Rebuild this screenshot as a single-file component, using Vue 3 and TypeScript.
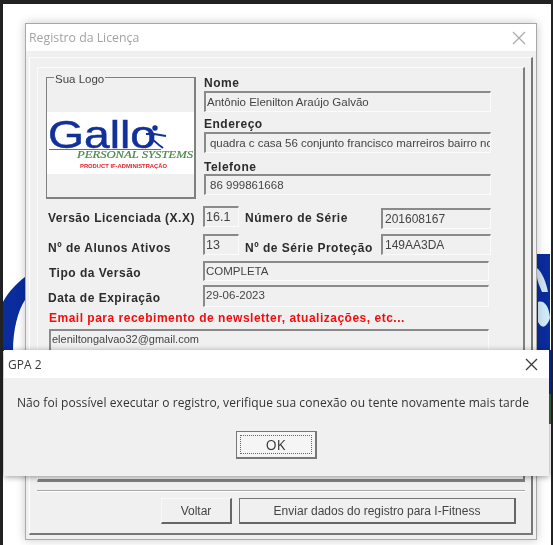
<script setup lang="ts">
interface Row {
  label: string
  value: string
  labelClass: string
  fieldClass: string
}

const fullRows: Row[] = [
  { label: 'Tipo da Versão', value: 'COMPLETA', labelClass: 'lab-tipo', fieldClass: 'f-tipo' },
  { label: 'Data de Expiração', value: '29-06-2023', labelClass: 'lab-data', fieldClass: 'f-data' },
]
</script>

<template>
  <div class="page">
    <div class="screen">
      <svg class="backdrop" width="553" height="545" viewBox="0 0 553 545" aria-hidden="true">
        <path d="M3 302 C9 291 17 283 25 277 L25 300 C18 310 13 330 13 351 L3 351 Z" fill="#0a2c9c" />
        <rect x="537" y="254" width="13" height="96" fill="#0a2c9c" />
        <path d="M537 268 C542 272 546 282 548 292 L542 292 C539 285 537 280 537 276 Z" fill="#cfe2f5" />
        <path d="M538 302 C544 300 549 306 550 318 C547 327 542 330 538 322 Z" fill="#cfeaf8" />
        <rect x="549" y="350" width="2" height="44" fill="#0a2c9c" />
        <rect x="549" y="394" width="2" height="30" fill="#3c6a44" />
      </svg>

      <section class="window">
        <header class="titlebar">
          <span class="title">Registro da Licença</span>
          <svg class="close" width="14" height="14" viewBox="0 0 14 14" aria-hidden="true">
            <path d="M1 1 L13 13 M13 1 L1 13" stroke="#a9a9a9" stroke-width="1.2" fill="none" />
          </svg>
        </header>

        <div class="body">
          <div class="outer">
            <div class="frame">
              <div class="top">
                <div class="logo-box">
                  <span class="legend">Sua Logo</span>
                  <div class="logo">
                    <svg width="148" height="62" viewBox="0 0 148 62" aria-label="Gallo Personal Systems">
                      <text x="1" y="36" class="gallo" textLength="108" lengthAdjust="spacingAndGlyphs">Gallo</text>
                      <path d="M2 37.5 L114 37.5" stroke="#5a68b4" stroke-width="1.2" />
                      <g stroke="#12309a" fill="none" stroke-width="1.8">
                        <circle cx="108" cy="16" r="1.8" fill="#12309a" />
                        <path d="M99 22 L107 22 L119 24 M107 22 L105 27 L98 36 M105 27 L112 33 L116 36" />
                      </g>
                      <text x="30" y="46" class="personal" textLength="116" lengthAdjust="spacingAndGlyphs">PERSONAL SYSTEMS</text>
                      <text x="33" y="56" class="tiny" textLength="87" lengthAdjust="spacingAndGlyphs">PRODUCT IF-ADMINISTRAÇÃO</text>
                    </svg>
                  </div>
                </div>
                <div class="contact">
                  <label class="lab lab-nome">Nome</label>
                  <div class="field f-nome">Antônio Elenilton Araújo Galvão</div>
                  <label class="lab lab-end">Endereço</label>
                  <div class="field f-end indent">quadra c casa 56 conjunto francisco marreiros bairro nc</div>
                  <label class="lab lab-tel">Telefone</label>
                  <div class="field f-tel indent">86 999861668</div>
                </div>
              </div>

              <div class="row row-versao">
                <label class="lab lab-left">Versão Licenciada (X.X)</label>
                <div class="field small top-text">16.1</div>
                <label class="lab lab-mid">Número de Série</label>
                <div class="field serial serial-low indent-s">201608167</div>
              </div>
              <div class="row row-alunos">
                <label class="lab lab-left">Nº de Alunos Ativos</label>
                <div class="field small top-text">13</div>
                <label class="lab lab-mid">Nº de Série Proteção</label>
                <div class="field serial top-text indent-s">149AA3DA</div>
              </div>

              <div v-for="r in fullRows" :key="r.label" class="row" :class="r.fieldClass + '-row'">
                <label class="lab lab-left" :class="r.labelClass">{{ r.label }}</label>
                <div class="field wide top-text" :class="r.fieldClass">{{ r.value }}</div>
              </div>

              <p class="email-label">Email para recebimento de newsletter, atualizações, etc...</p>
              <div class="field email">eleniltongalvao32@gmail.com</div>
            </div>

            <div class="separator"></div>

            <div class="actions">
              <button class="btn btn-back" type="button">Voltar</button>
              <button class="btn btn-send" type="button">Enviar dados do registro para I-Fitness</button>
            </div>
          </div>
        </div>
      </section>

      <section class="dialog">
        <header class="dlg-title">
          <span>GPA 2</span>
          <svg width="13" height="13" viewBox="0 0 13 13" aria-hidden="true">
            <path d="M1 1 L12 12 M12 1 L1 12" stroke="#3c3c3c" stroke-width="1.3" fill="none" />
          </svg>
        </header>
        <div class="dlg-body">
          <p class="msg">Não foi possível executar o registro, verifique sua conexão ou tente novamente mais tarde</p>
          <button class="ok" type="button"><span>OK</span></button>
        </div>
      </section>
    </div>
  </div>
</template>

<style>
html, body { margin: 0; background: #222; }
</style>

<style scoped>
.page {
  width: 553px;
  height: 545px;
  overflow: hidden;
  background: #222;
  padding: 4px 2px 0 3px;
  box-sizing: border-box;
  font-family: "Liberation Sans", Arial, sans-serif;
  color: #3c3c3c;
}
.screen {
  position: relative;
  width: 548px;
  height: 541px;
  background: #fff;
  filter: blur(0.4px);
}
.backdrop { position: absolute; left: -3px; top: -4px; }

/* main window */
.window {
  position: absolute;
  left: 22px;
  top: 19px;
  width: 512px;
  height: 517px;
  box-sizing: border-box;
  border: 1px solid #a8a8a8;
  background: #f0f0f0;
  box-shadow: 0 0 9px rgba(0, 0, 0, 0.22);
  display: flex;
  flex-direction: column;
}
.titlebar {
  height: 27px;
  flex: none;
  background: #fff;
  display: flex;
  align-items: center;
  justify-content: space-between;
  padding: 0 10px 0 3px;
}
.title { font: 12.3px "Open Sans", sans-serif; color: #a3a3a3; }
.body { flex: 1; padding: 6px 3px 4px 3px; min-height: 0; display: flex; }
.outer {
  flex: 1;
  box-sizing: border-box;
  border: 1px solid #fff;
  border-right: 2px solid #777;
  border-bottom: 2px solid #777;
  border-top-color: #fafafa;
  padding: 9px 6px 0 7px;
  display: flex;
  flex-direction: column;
}
.frame {
  height: 415px;
  flex: none;
  box-sizing: border-box;
  border: 1px solid #fafafa;
  border-right: 2px solid #808080;
  border-bottom: 3px solid #808080;
  padding: 9px 0 0 8px;
}
.separator {
  margin-top: 8px;
  height: 1px;
  background: #a8a8a8;
  border-bottom: 1px solid #fff;
}
.actions {
  display: flex;
  justify-content: flex-end;
  gap: 7px;
  padding: 6px 9px 0 0;
}
.btn {
  height: 26px;
  box-sizing: border-box;
  background: #f0f0f0;
  border: 1px solid #f8f8f8;
  border-right: 2px solid #666;
  border-bottom: 2px solid #666;
  font: 12px "Liberation Sans", sans-serif;
  color: #444;
  padding: 0;
}
.btn-back { width: 71px; }
.btn-send {
  width: 277px;
  border-top: 1px solid #777;
  border-left: 1px solid #777;
}

/* form */
.top { display: flex; gap: 8px; height: 122px; }
.logo-box {
  position: relative;
  width: 150px;
  height: 122px;
  box-sizing: border-box;
  border: 1px solid #808080;
  border-width: 1px 2px 2px 1px;
  padding-top: 34px;
}
.legend {
  position: absolute;
  left: 7px;
  top: -5px;
  padding: 0 1px;
  background: #f0f0f0;
  font-size: 11.5px;
  line-height: 13px;
  color: #444;
}
.logo { height: 62px; background: #fff; }
.logo svg { display: block; }
.gallo { font: 39px "Liberation Sans", sans-serif; fill: #12309a; stroke: #12309a; stroke-width: 0.5; }
.personal { font: italic 11px "Liberation Serif", serif; fill: #4a8a48; stroke: #4a8a48; stroke-width: 0.2; }
.tiny { font: bold 4.6px "Liberation Sans", sans-serif; fill: #e8202a; }

.contact { width: 287px; display: flex; flex-direction: column; }
.lab {
  font: bold 12px "Liberation Sans", sans-serif;
  letter-spacing: 0.5px;
  color: #2c2c2c;
  line-height: 14px;
  white-space: nowrap;
}
.field {
  box-sizing: border-box;
  background: #f0f0f0;
  border-top: 2px solid #8a8a8a;
  border-left: 2px solid #8a8a8a;
  border-right: 1px solid #fbfbfb;
  border-bottom: 1px solid #fbfbfb;
  font-size: 11.5px;
  color: #444;
  padding-left: 1px;
  white-space: nowrap;
  overflow: hidden;
  display: flex;
  align-items: center;
}
.indent { padding-left: 4px; }
.indent-s { padding-left: 2px; font-size: 12px; }
.f-end { letter-spacing: -0.03px; }
.top-text { align-items: flex-start; padding-top: 2px; }
.lab-nome { margin-top: -1px; height: 15px; }
.f-nome { height: 21px; }
.lab-end { margin-top: 5px; height: 15px; }
.f-end { height: 21px; }
.lab-tel { margin-top: 7px; height: 15px; }
.f-tel { height: 21px; margin-top: -1px; }

.row { display: flex; align-items: flex-start; height: 21px; }
.row-versao { margin-top: 7px; }
.row-alunos { margin-top: 7px; }
.f-tipo-row { margin-top: 6px; height: 20px; }
.f-data-row { margin-top: 4px; height: 22px; }
.lab-left { width: 157px; flex: none; padding-left: 2px; box-sizing: border-box; margin-top: 5px; }
.row-alunos .lab { margin-top: 7px; }
.lab-tipo { margin-top: 5px; padding-left: 3px; }
.lab-data { margin-top: 6px; padding-left: 2px; }
.lab-mid { width: 142px; flex: none; padding-left: 6px; margin-top: 5px; box-sizing: border-box; }
.small { width: 36px; height: 21px; flex: none; font-size: 12.5px; }
.serial { width: 110px; height: 21px; flex: none; }
.serial-low { margin-top: 2px; }
.wide { width: 286px; height: 100%; flex: none; }
.email-label {
  margin: 4px 0 0 3px;
  font: bold 12px "Liberation Sans", sans-serif;
  letter-spacing: 0.5px;
  line-height: 14px;
  color: #f00f0f;
  white-space: nowrap;
}
.email {
  margin: 4px 0 0 3px;
  width: 440px;
  height: 30px;
  align-items: flex-start;
  padding-top: 2px;
  padding-left: 1px;
  font-size: 11px;
}

/* dialog */
.dialog {
  position: absolute;
  left: 1px;
  top: 346px;
  width: 545px;
  height: 126px;
  background: #f0f0f0;
  box-shadow: 0 1px 6px rgba(0, 0, 0, 0.4);
  display: flex;
  flex-direction: column;
  font-family: "Open Sans", sans-serif;
}
.dlg-title {
  height: 28px;
  flex: none;
  background: #fff;
  display: flex;
  align-items: center;
  justify-content: space-between;
  padding: 0 11px 0 4px;
  font-size: 12px;
  color: #3a3a3a;
}
.dlg-body { display: flex; flex-direction: column; align-items: center; }
.msg {
  align-self: flex-start;
  margin: 17px 0 0 13px;
  font-size: 12px;
  letter-spacing: 0.08px;
  line-height: 16px;
  white-space: nowrap;
  color: #333;
}
.ok {
  margin: 20px 0 0 -1px;
  width: 81px;
  height: 28px;
  box-sizing: border-box;
  border: 1px solid #777;
  border-right: 2px solid #777;
  border-bottom: 2px solid #777;
  background: #f5f5f5;
  padding: 3px;
  font: 14px "Open Sans", sans-serif;
  color: #333;
}
.ok span {
  display: flex;
  align-items: center;
  justify-content: center;
  height: 100%;
  box-sizing: border-box;
  border: 1px dotted #666;
}
</style>
